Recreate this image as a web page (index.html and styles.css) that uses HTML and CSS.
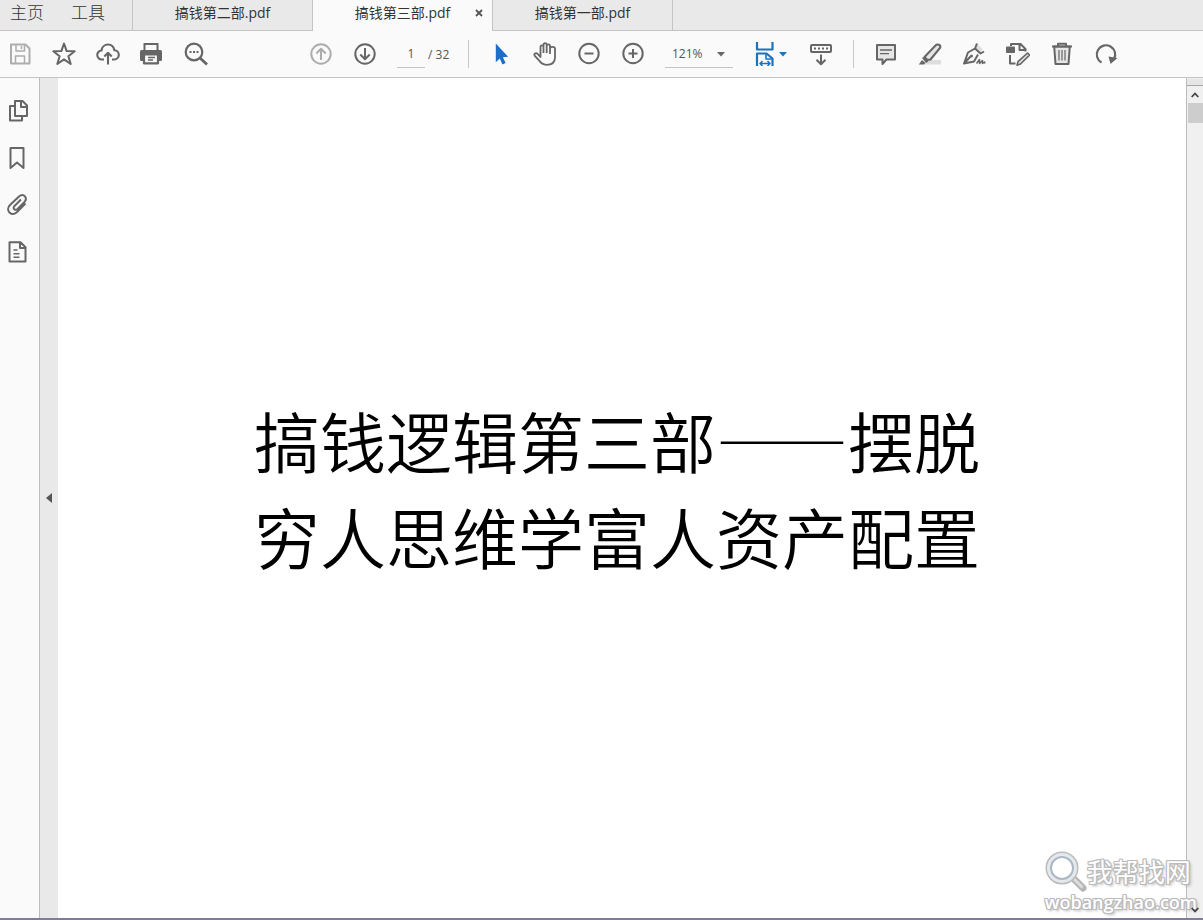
FILE: index.html
```html
<!DOCTYPE html>
<html lang="zh-CN">
<head>
<meta charset="utf-8">
<title>搞钱第三部.pdf</title>
<link rel="stylesheet" href="styles.css">
</head>
<body>
<div class="app">
  <header class="tabbar">
    <nav class="menu">
      <button class="menu-item" type="button">主页</button>
      <button class="menu-item" type="button">工具</button>
    </nav>
    <div class="tabs">
      <button class="tab" type="button">搞钱第二部.pdf</button>
      <div class="tab tab-active">
        <button class="tab-title" type="button">搞钱第三部.pdf</button>
        <button class="tab-close" type="button" aria-label="关闭">
          <svg width="8" height="8" viewBox="0 0 8 8"><path d="M1 1l6 6M7 1L1 7" stroke="#555" stroke-width="1.8"/></svg>
        </button>
      </div>
      <button class="tab" type="button">搞钱第一部.pdf</button>
    </div>
  </header>

  <div class="toolbar">
    <div class="group file-group">
      <button class="tool dim" type="button" aria-label="保存"><svg class="icon" viewBox="0 0 24 24"><path d="M3 2.500h14.500l4 4v15H3z"/><path d="M8 2.500v6.500h8.500V2.500M7.500 21.500v-7.500h9v7.500" stroke-width="1.500"/><path d="M13.500 4v3" stroke-width="1.500"/></svg></button>
      <button class="tool" type="button" aria-label="收藏"><svg class="icon" viewBox="0 0 24 24"><path d="M12 1.600l2.700 7.500 8 .2-6.300 4.900 2.300 7.800L12 17.400 5.300 22l2.300-7.800L1.300 9.300l8-.2z"/></svg></button>
      <button class="tool" type="button" aria-label="上传"><svg class="icon" viewBox="0 0 24 24"><path d="M8 17.500H6a4.500 4.500 0 0 1-.5-9C6 5 8.600 2.500 12 2.500s5.800 2.500 6.400 5.800a4.600 4.600 0 0 1-.4 9.200h-2M12 22.500V11M8.300 14.500L12 10.800l3.700 3.700" stroke-width="2.100"/></svg></button>
      <button class="tool" type="button" aria-label="打印"><svg class="icon" viewBox="0 0 24 24"><path d="M3.500 1h15v7h-15z" fill="#666" stroke="none"/><rect x="0" y="8" width="22" height="11" rx="1.500" fill="#666" stroke="none"/><path d="M5.500 3h11v5h-11z" fill="#fafafa" stroke="none"/><path d="M4 12.500h14v8.800H4z" fill="#fafafa" stroke-width="2.200"/><path d="M8 15.500h7M8 18h5" stroke-width="1.300"/></svg></button>
      <button class="tool" type="button" aria-label="搜索"><svg class="icon" viewBox="0 0 24 24"><circle cx="10" cy="10" r="8.300" stroke-width="2.200"/><path d="M16 16l7 6.500" stroke-width="2.800"/><path d="M5.500 9h2v2h-2zM9 9h2v2H9zM12.500 9h2v2h-2z" fill="#666" stroke="none"/></svg></button>
    </div>

    <div class="group">
      <button class="tool dim" type="button" aria-label="上一页"><svg class="icon" viewBox="0 0 24 24"><circle cx="12" cy="12" r="9.700"/><path d="M12 18V7M7.300 11.500L12 6.800l4.700 4.700"/></svg></button>
      <button class="tool" type="button" aria-label="下一页"><svg class="icon" viewBox="0 0 24 24"><circle cx="12" cy="12" r="9.700"/><path d="M12 6v11M7.300 12.500l4.700 4.700 4.700-4.700"/></svg></button>
      <label class="pages"><input class="page-input" type="text" value="1" aria-label="页码"><span>/ 32</span></label>
      <span class="divider"></span>
      <button class="tool" type="button" aria-label="选择"><svg class="icon" viewBox="0 0 24 24"><path d="M6.800 1.500v18.700l4-3.800 2.600 6.100 3.200-1.400-2.700-5.900 5.200-.5z" fill="#1b6fc9" stroke="none"/></svg></button>
      <button class="tool" type="button" aria-label="手形"><svg class="icon" viewBox="0 0 24 24"><path d="M7.500 13V5c0-2.300 3-2.300 3 0v6M10.500 11V3c0-2.400 3.200-2.400 3.200 0v8M13.700 11V4c0-2.300 3.300-2.300 3.300 0v8M17 12V6.500c0-2.200 5-2.200 5 0v9c0 4.700-3 7.300-8.500 7.300-3.800 0-5.800-1.800-7.500-4.500L1.800 13.800c-1.300-2 1-3.500 2.800-2L7.500 15v-2" stroke-width="1.800"/></svg></button>
      <button class="tool" type="button" aria-label="缩小"><svg class="icon" viewBox="0 0 24 24"><circle cx="12" cy="11.500" r="9.700"/><path d="M7.500 11.500h9"/></svg></button>
      <button class="tool" type="button" aria-label="放大"><svg class="icon" viewBox="0 0 24 24"><circle cx="12" cy="11.500" r="9.700"/><path d="M7.500 11.500h9M12 7v9"/></svg></button>
      <div class="zoom">
        <select class="zoom-select" aria-label="缩放比例"><option>121%</option></select>
        <svg class="caret" width="8" height="5" viewBox="0 0 8 5"><path d="M0 0h8L4 4.500z" fill="#666"/></svg>
      </div>
      <button class="tool fit" type="button" aria-label="适合宽度">
        <svg class="icon blue" viewBox="0 0 24 24"><path d="M2 0v7.500h15.500V0M2 24V11.500h9.500l6 5V24"/><path d="M11 11.500v5.500h6.500" stroke-width="1.600"/><path d="M5 21.500h10M7.500 19L5 21.500 7.500 24M12.500 19l2.500 2.500-2.500 2.500" stroke-width="1.500"/></svg>
        <svg width="8" height="5" viewBox="0 0 8 5"><path d="M0 0h8L4 4.500z" fill="#1c73bd"/></svg>
      </button>
      <button class="tool" type="button" aria-label="隐藏工具栏"><svg class="icon" viewBox="0 0 24 24"><rect x="2" y="3" width="20" height="7" rx="1" stroke-width="2"/><path d="M5 6.500h14" stroke-width="2" stroke-dasharray="2 2"/><path d="M12 12.500v9.500M7.500 17.700l4.500 4.500 4.500-4.500"/></svg></button>
      <span class="divider"></span>
      <button class="tool" type="button" aria-label="注释"><svg class="icon" viewBox="0 0 24 24"><path d="M3 3h18v14.500h-8.500L8.500 22v-4.500H3z" fill="#e6e6e6"/><path d="M6 8h12M6 11.700h9" stroke-width="1.300"/></svg></button>
      <button class="tool" type="button" aria-label="高亮"><svg class="icon" viewBox="0 0 24 24"><path d="M12 18h11v4.500H6z" fill="#dedede" stroke="none"/><path d="M17.500 3.500c1.500-1.800 5.500-1 4.800 2L12.500 17.500l-3 .5-3-3z" fill="#e6e6e6"/><path d="M4 16l1.500-1 5 4.500L8 21z" fill="#666" stroke="none"/><path d="M4 18l3.500 3L6 22.500H.8z" fill="#666" stroke="none"/></svg></button>
      <button class="tool" type="button" aria-label="签名"><svg class="icon" viewBox="0 0 24 24"><path d="M13 6l2-4.500 5.500 5.500-2.500 4z" fill="#dedede" stroke="none"/><path d="M15 1.500l-2 5 5.500 5L22 9.500M13 6.500L6 10.500 2 21.500l10-2 4-7M2.500 21l6-6.500"/><circle cx="9.500" cy="14" r="1.500" fill="#666" stroke="none"/><path d="M14.500 21.500l3-4v4l3-3v3l2-1.500.5 1.500" stroke-width="1.500"/></svg></button>
      <button class="tool" type="button" aria-label="编辑"><svg class="icon" viewBox="0 0 24 24"><path d="M5 4V2h9.500L19.500 7v2.500M13.500 2v6h6M4 13v8.500h5.500"/><rect x="0" y="4.500" width="9" height="6.500" rx="1" fill="#666" stroke="none"/><path d="M21.500 11l2 2-9 9-3.500 1.200 1-3.500z" fill="#dedede" stroke-width="1.600"/></svg></button>
      <button class="tool" type="button" aria-label="删除"><svg class="icon" viewBox="0 0 24 24"><path d="M4.200 4.500L5.500 22h13l1.300-17.500z" fill="#e6e6e6"/><path d="M2 4.500h20M8 4.500V1.800h8v2.700" stroke-width="2"/><path d="M9 8v10.500M12 8v10.500M15 8v10.500" stroke-width="1.200"/></svg></button>
      <button class="tool" type="button" aria-label="旋转"><svg class="icon" viewBox="0 0 24 24"><path d="M7.500 20.500A9.200 9.200 0 1 1 20 17" stroke-width="2.200"/><path d="M14.500 14.500l9 1.500-7 6z" fill="#666" stroke="none"/></svg></button>
    </div>
  </div>

  <main class="workspace">
    <aside class="sidebar">
      <button class="side-tool" type="button" aria-label="页面缩略图"><svg class="icon" viewBox="0 0 24 24"><path d="M9 2h7.500l4.500 4.500V17H9zM15 2v6h6M8.500 7H4v14.500h12V17.500"/></svg></button>
      <button class="side-tool" type="button" aria-label="书签"><svg class="icon" viewBox="0 0 24 24"><path d="M4.500 2h13v20L11 16.500 4.500 22z"/></svg></button>
      <button class="side-tool" type="button" aria-label="附件"><svg class="icon" viewBox="0 0 24 24"><path d="M15 6.500l-6.500 6.500c-2.500 2.500.8 5 3 3L18 9.500c4.500-4.500-.5-10-5-6L4 12c-5 5 1 12 6.500 7.500l9-9"/></svg></button>
      <button class="side-tool" type="button" aria-label="内容"><svg class="icon" viewBox="0 0 24 24"><path d="M3.500 2.200h11l5 5v14.300h-16zM14 2.500V8h5.500"/><path d="M7.500 10h4M7.500 13.700h6M7.500 17.300h6" stroke-width="1.500"/></svg></button>
    </aside>
    <button class="collapse" type="button" aria-label="折叠"><svg width="6" height="10" viewBox="0 0 6 10"><path d="M6 0v10L0 5z" fill="#555"/></svg></button>
    <article class="document">
      <h1 class="headline">搞钱逻辑第三部——摆脱<br>穷人思维学富人资产配置</h1>
    </article>
    <div class="scrollbar">
      <span class="split"></span>
      <button class="scroll-button" type="button" aria-label="向上滚动"><svg width="8" height="6" viewBox="0 0 8 6"><path d="M.7 5L4 1.500 7.300 5" fill="none" stroke="#444" stroke-width="1.800"/></svg></button>
      <span class="thumb"></span>
      <span class="track"></span>
      <button class="scroll-button scroll-down" type="button" aria-label="向下滚动"><svg width="8" height="6" viewBox="0 0 8 6"><path d="M.7 1L4 4.500 7.300 1" fill="none" stroke="#444" stroke-width="1.800"/></svg></button>
    </div>
    <div class="watermark">
      <div class="brand">
        <svg width="42" height="42" viewBox="0 0 42 42"><path d="M28 27l10 10" stroke="#b5b5b5" stroke-width="7" stroke-linecap="round"/><path d="M28 27l9.500 9.500" stroke="#ddd" stroke-width="3"/><circle cx="17" cy="17" r="13" fill="none" stroke="#bcbcbc" stroke-width="7"/><circle cx="17" cy="17" r="13" fill="#fff" stroke="#e4e9ed" stroke-width="4"/><circle cx="17" cy="17" r="11" fill="none" stroke="#acb8c3" stroke-width="2"/></svg>
        <span class="brand-name">我帮找网</span>
      </div>
      <span class="brand-url">wobangzhao.com</span>
    </div>
  </main>
</div>
</body>
</html>
```

FILE: styles.css
```css
* { box-sizing: border-box; }
body {
  margin: 0;
  font-family: "Open Sans", "Noto Sans CJK SC", sans-serif;
  color: #333;
}
button {
  display: flex;
  align-items: center;
  justify-content: center;
  margin: 0;
  padding: 0;
  border: 0;
  background: none;
  color: inherit;
  font: inherit;
}
svg { display: block; flex: none; }
.app {
  display: flex;
  flex-direction: column;
  min-height: 100vh;
  border-bottom: 2px solid #7f7d99;
}
.tabbar {
  display: flex;
  height: 31px;
  background: #e9e9e9;
}
.menu {
  display: flex;
  align-items: flex-start;
  gap: 27px;
  width: 132px;
  padding-left: 10px;
  border-bottom: 1px solid #c4c4c4;
}
.menu-item {
  font-size: 17px;
  line-height: 26px;
  font-weight: 300;
}
.tabs {
  display: flex;
  flex: 1;
  border-bottom: 1px solid #c4c4c4;
  border-left: 1px solid #c4c4c4;
}
.tab {
  display: flex;
  align-items: center;
  justify-content: center;
  width: 180px;
  height: 30px;
  padding-bottom: 4px;
  border-right: 1px solid #c4c4c4;
  font-size: 14px;
  line-height: 20px;
}
.tab-active {
  position: relative;
  height: 31px;
  padding-bottom: 5px;
  background: #fafafa;
}
.tab-close {
  position: absolute;
  top: 5px;
  right: 5px;
  width: 16px;
  height: 16px;
}
.toolbar {
  display: flex;
  align-items: center;
  gap: 101px;
  height: 47px;
  padding-left: 8px;
  border-bottom: 1px solid #c4c4c4;
  background: #fafafa;
}
.group {
  display: flex;
  align-items: center;
  gap: 20px;
}
.tool { width: 24px; height: 24px; }
.icon {
  width: 24px;
  height: 24px;
  fill: none;
  stroke: #666;
  stroke-width: 2;
  stroke-linejoin: round;
}
.dim .icon { stroke: #adadad; }
.icon.blue { stroke: #1c73bd; stroke-width: 2.2; }
.fit { width: 36px; }
.pages {
  display: flex;
  align-items: center;
  gap: 3px;
  width: 51px;
  white-space: nowrap;
  font-size: 12px;
  color: #555;
}
.page-input {
  width: 28px;
  height: 28px;
  padding: 0;
  border: 0;
  border-bottom: 1px solid #c4c4c4;
  background: none;
  color: inherit;
  font: inherit;
  text-align: center;
}
.divider { width: 1px; height: 28px; background: #c8c8c8; }
.zoom { position: relative; width: 68px; }
.zoom-select {
  display: block;
  width: 100%;
  height: 28px;
  padding: 0 0 0 7px;
  border: 0;
  border-bottom: 1px solid #c4c4c4;
  border-radius: 0;
  appearance: none;
  background: none;
  color: #555;
  font: inherit;
  font-size: 12px;
}
.caret { position: absolute; top: 12px; right: 8px; pointer-events: none; }
.workspace { position: relative; display: flex; flex: 1; }
.sidebar {
  display: flex;
  flex-direction: column;
  gap: 23px;
  width: 40px;
  padding: 21px 6px;
  border-right: 1px solid #bcbcbc;
  background: #fafafa;
}
.side-tool { width: 24px; height: 24px; }
.collapse { width: 18px; background: #e9e9e9; }
.document {
  flex: 1;
  padding: 313px 10px 0 0;
  background: #fff;
}
.headline {
  margin: 0;
  color: #000;
  font-family: "Noto Sans CJK SC DemiLight", "Noto Sans CJK SC", sans-serif;
  font-size: 66px;
  font-weight: 350;
  line-height: 96px;
  text-align: center;
}
.scrollbar {
  display: flex;
  flex-direction: column;
  width: 17px;
  padding-top: 1px;
  border-left: 1px solid #bcbcbc;
  background: #f0f0f0;
}
.split { height: 7px; border-bottom: 1px solid #a6a6a6; background: #e6e6e6; }
.scroll-button { height: 17px; }
.scroll-down { position: relative; z-index: 2; }
.thumb { height: 20px; margin-left: 1px; background: #cdcdcd; }
.track { flex: 1; }
.watermark {
  position: absolute;
  right: 6px;
  bottom: 7px;
  z-index: 1;
  display: flex;
  flex-direction: column;
  color: #fff;
  text-shadow: 1px 0 #bbb, -1px 0 #bbb, 0 1px #bbb, 0 -1px #bbb,
    1px 1px #bbb, -1px -1px #bbb, 1px -1px #bbb, -1px 1px #bbb, 2px 2px 3px #aaa;
}
.brand { display: flex; align-items: center; height: 42px; }
.brand-name { font-size: 26px; line-height: 42px; font-weight: 400; }
.brand-url { font-size: 18px; line-height: 18px; font-weight: 600; }
```
